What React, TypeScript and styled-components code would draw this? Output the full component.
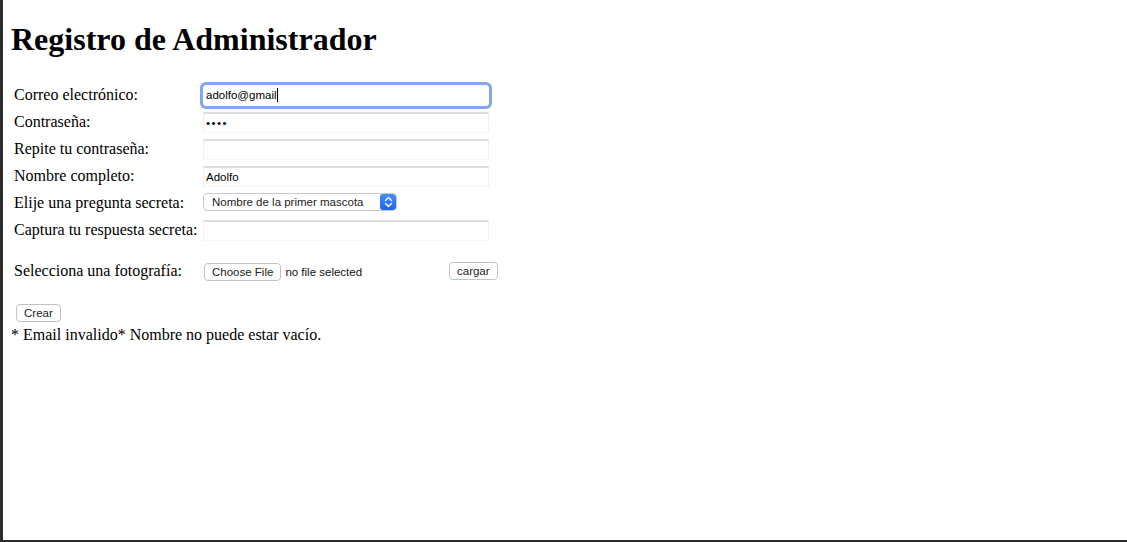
import React from "react";
import styled, { createGlobalStyle } from "styled-components";

const Global = createGlobalStyle`
  html {
    min-height: 100vh;
    box-sizing: border-box;
    border-left: 3px solid #2c2c2c;
    border-bottom: 2px solid #2c2c2c;
    background: #fff;
  }
  body {
    margin: 0 8px 8px;
    font-family: "Liberation Serif", "Times New Roman", serif;
    font-size: 16px;
    color: #000;
  }
`;

const Title = styled.h1`
  margin: 21px 0;
  font-size: 32px;
  line-height: 37px;
  font-weight: bold;
`;

const Form = styled.form`
  display: flex;
  flex-direction: column;
  gap: 6px;
  padding: 6px 0 0 3px;
  margin: 0;
`;

const Row = styled.div<{ $top?: number }>`
  display: flex;
  align-items: flex-start;
  height: 21px;
  margin-top: ${(p) => p.$top ?? 0}px;
`;

const Label = styled.label`
  width: 188px;
  flex: none;
  line-height: 18px;
  padding-top: 1px;
  white-space: nowrap;
`;

const FieldWrap = styled.div`
  position: relative;
  margin-left: 1px;
`;

const TextInput = styled.input<{ $focused?: boolean }>`
  box-sizing: border-box;
  width: 286px;
  height: 21px;
  margin: 0;
  padding: 0 3px 1px 2px;
  font-family: "Liberation Sans", Arial, sans-serif;
  font-size: 11.5px;
  color: #000;
  background: #fff;
  border: 1px solid #efefef;
  border-top: 2px solid #dedede;
  border-bottom-color: #f6f6f6;
  outline: none;
  &[type="password"] {
    letter-spacing: 1.5px;
  }
  ${(p) =>
    p.$focused &&
    `
    border: 1px solid #fff;
    border-radius: 3px;
    box-shadow: 0 0 0 3px #82a7ef;
  `}
`;

const Caret = styled.span`
  position: absolute;
  left: 74px;
  top: 3px;
  width: 1px;
  height: 14px;
  background: #000;
`;

const SelectBox = styled.div`
  box-sizing: border-box;
  display: flex;
  align-items: stretch;
  width: 194px;
  height: 18px;
  margin-left: 1px;
  border: 1px solid #c9c9c9;
  border-radius: 4px;
  overflow: hidden;
  font-family: "Liberation Sans", Arial, sans-serif;
  font-size: 11.5px;
  background: #fff;
`;

const SelectText = styled.span`
  flex: 1;
  padding-left: 8px;
  line-height: 16px;
  color: #222;
  white-space: nowrap;
`;

const SelectArrow = styled.span`
  width: 16px;
  display: flex;
  align-items: center;
  justify-content: center;
  border-radius: 3px;
  background: linear-gradient(#4b8df8, #1d63ec);
`;

const FilePicker = styled.div`
  display: flex;
  align-items: center;
  width: 246px;
  margin-left: 1px;
  margin-top: 2px;
`;

const Button = styled.button<{ $ml?: number; $mt?: number }>`
  box-sizing: border-box;
  height: 18px;
  margin: ${(p) => p.$mt ?? 0}px 0 0 ${(p) => p.$ml ?? 0}px;
  padding: 0 7px;
  background: #fff;
  border: 1px solid #c3c3c3;
  border-radius: 4px;
  font-family: "Liberation Sans", Arial, sans-serif;
  font-size: 11.5px;
  color: #222;
  line-height: 16px;
  flex: none;
`;

const FileName = styled.span`
  margin-left: 4px;
  font-family: "Liberation Sans", Arial, sans-serif;
  font-size: 11.5px;
  color: #111;
  white-space: nowrap;
`;

const CreateRow = styled.div`
  display: flex;
  padding: 22px 0 4px 5px;
`;

const Errors = styled.div`
  line-height: 18px;
`;

const UpDown = () => (
  <svg width="9" height="12" viewBox="0 0 9 12" fill="none">
    <path d="M1.5 4.5 L4.5 1.5 L7.5 4.5" stroke="#fff" strokeWidth="1.4" strokeLinecap="round" strokeLinejoin="round" />
    <path d="M1.5 7.5 L4.5 10.5 L7.5 7.5" stroke="#fff" strokeWidth="1.4" strokeLinecap="round" strokeLinejoin="round" />
  </svg>
);

export default function App() {
  return (
    <>
      <Global />
      <Title>Registro de Administrador</Title>
      <Form onSubmit={(e) => e.preventDefault()}>
        <Row>
          <Label>Correo electrónico:</Label>
          <FieldWrap>
            <TextInput $focused type="text" defaultValue="adolfo@gmail" />
            <Caret />
          </FieldWrap>
        </Row>
        <Row>
          <Label>Contraseña:</Label>
          <FieldWrap>
            <TextInput type="password" defaultValue="abcd" />
          </FieldWrap>
        </Row>
        <Row>
          <Label>Repite tu contraseña:</Label>
          <FieldWrap>
            <TextInput type="password" defaultValue="" />
          </FieldWrap>
        </Row>
        <Row>
          <Label>Nombre completo:</Label>
          <FieldWrap>
            <TextInput type="text" defaultValue="Adolfo" />
          </FieldWrap>
        </Row>
        <Row>
          <Label>Elije una pregunta secreta:</Label>
          <SelectBox>
            <SelectText>Nombre de la primer mascota</SelectText>
            <SelectArrow>
              <UpDown />
            </SelectArrow>
          </SelectBox>
        </Row>
        <Row>
          <Label>Captura tu respuesta secreta:</Label>
          <FieldWrap>
            <TextInput type="text" defaultValue="" />
          </FieldWrap>
        </Row>
        <Row $top={14}>
          <Label>Selecciona una fotografía:</Label>
          <FilePicker>
            <Button type="button" $ml={1}>Choose File</Button>
            <FileName>no file selected</FileName>
          </FilePicker>
          <Button type="button" $mt={1}>cargar</Button>
        </Row>
      </Form>
      <CreateRow>
        <Button type="button">Crear</Button>
      </CreateRow>
      <Errors>* Email invalido* Nombre no puede estar vacío.</Errors>
    </>
  );
}
